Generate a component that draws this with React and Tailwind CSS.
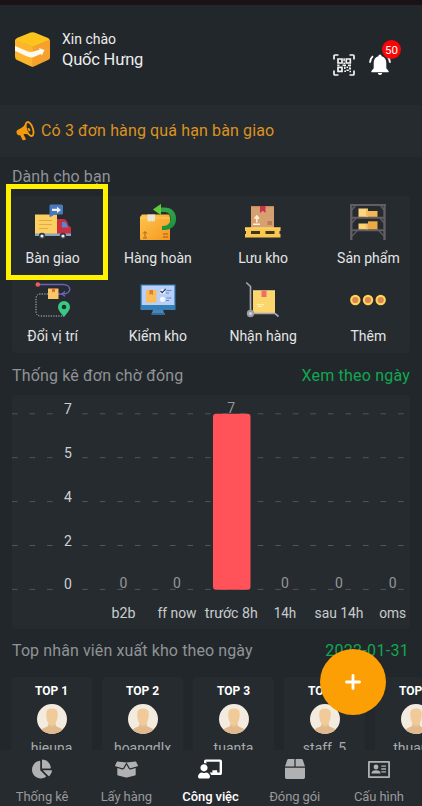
import React from "react";
import { FaChartPie, FaBoxOpen, FaChalkboardTeacher, FaBox } from "react-icons/fa";

function Logo() {
  return (
    <svg width="36" height="35" viewBox="0 0 36 35">
      <path d="M15.500 0.600 Q17.500 -0.200 19.500 0.600 L33 6 Q35 7 34 8.500 L18 15 L0.500 8.500 Q0 7 2 6 Z" fill="#fcc41c" />
      <path d="M0 7.500 L18 14.500 V34.500 Q17 35 15 34 L2 28 Q0 27 0 24.500 Z" fill="#fcb52c" />
      <path d="M18 14.500 L35 7.500 V25.500 Q35 27 33 28 L20 34 Q18 35 17 34.500 Z" fill="#f5a12b" />
      <path d="M0 14 L13 19.500 Q16 20.700 20 19 L24.500 17.800 L24 16 L29.500 18 L26.800 23.500 L26 22 L18 25.300 Q15 26 11 24 L0 18.800 Z" fill="#fffaf0" />
    </svg>
  );
}

function ScanCode() {
  return (
    <svg width="22" height="22" viewBox="0 0 22 22" fill="none" stroke="#f4f5f5">
      <path d="M1 5.500 V2 Q1 1 2 1 H5.500 M16.500 1 H20 Q21 1 21 2 V5.500 M21 16.500 V20 Q21 21 20 21 H16.500 M5.500 21 H2 Q1 21 1 20 V16.500" strokeWidth="1.700" />
      <path d="M5 5 h4 v4 h-4 Z M13.300 5 h4 v4 h-4 Z M5 13.300 h4 v4 h-4 Z" strokeWidth="1.700" />
      <path d="M11.100 4.200 v3 M10.300 9.300 h1.800 M9.500 11.200 h3.500 M15 11.200 h3 M4.200 11.200 h2.300 M11.800 12.500 v2.500 M13.500 13.200 h1.700 M16 14.800 h2 M13.500 16.300 h2.300 M11.300 17.300 h1.700 M16.500 17.600 h1.500 M16.900 12.500 v1.300" strokeWidth="1.500" />
    </svg>
  );
}

function Bell() {
  return (
    <svg width="22" height="22" viewBox="0 0 22 22" fill="#fff">
      <path d="M11 0.500 q1.500 0 1.700 1.700 C16 3.200 17.300 5.800 17.300 9 V14.300 L19.600 17 V18.300 H2.400 V17 L4.700 14.300 V9 C4.700 5.800 6 3.200 9.300 2.200 Q9.500 0.500 11 0.500 Z" />
      <path d="M8.800 19 h4.400 q-0.300 2 -2.200 2 t-2.200 -2 Z" />
      <path d="M4 2.200 Q1.200 4.600 1 8.800 M18 2.200 Q20.800 4.600 21 8.800" fill="none" stroke="#fff" strokeWidth="1.700" />
    </svg>
  );
}

function Megaphone() {
  return (
    <svg width="19" height="20" viewBox="0 0 19 20" fill="none">
      <path d="M0.700 12.200 C0 10.700 0.800 9.300 2.300 8.600 C6 7 8.700 5 9.800 1.500 L15 15.300 C12.500 12.800 10 12.600 7.500 13.400 L9.800 17.700 Q10.200 18.800 8.900 19 L6.700 19.200 L4.200 14.200 C2.500 14.600 1.400 13.900 0.700 12.200 Z" fill="#f59a0b" />
      <ellipse cx="13.600" cy="8" rx="3.300" ry="7.300" transform="rotate(-19 13.600 8)" fill="#262b2f" stroke="#f59a0b" strokeWidth="1.800" />
      <path d="M11.500 7 Q14.500 6.500 14.300 10 L12.700 10.400 Z" fill="#f59a0b" />
    </svg>
  );
}

function Truck() {
  return (
    <svg width="36" height="36" viewBox="0 0 36 36">
      <path d="M22 15 h7 q2 0 3 2.500 l1.500 4 l2.500 2 V31 H22 Z" fill="#c92f42" />
      <path d="M27 18 h3 q1 0 1.500 1.500 l1.500 4 h-6 Z" fill="#5686d6" />
      <path d="M0 10.500 h22 v20 H0 Z" fill="#fbcf62" />
      <path d="M0 29.500 h36 v2.500 H0 Z" fill="#8ba5bb" />
      <path d="M4 16.500 h13 M4 20.500 h13 M4 24.500 h9" stroke="#e5a944" strokeWidth="1" />
      <circle cx="7" cy="32" r="3.200" fill="#353a43" /><circle cx="7" cy="32" r="1.600" fill="#eceff2" />
      <circle cx="28" cy="32" r="3.200" fill="#353a43" /><circle cx="28" cy="32" r="1.600" fill="#eceff2" />
      <path d="M15.500 0.500 h11 q1.500 0 1.500 1.500 v7 q0 1.500 -1.500 1.500 h-7 l-4 2.500 q-1 0 -1 -1.500 V2 q0 -1.500 1 -1.500 Z" fill="#4a78bf" />
      <path d="M17 4.700 h5 v-2 l4 3.200 l-4 3.200 v-2 h-5 Z" fill="#edf3fb" />
    </svg>
  );
}

function ReturnBox() {
  return (
    <svg width="36" height="36" viewBox="0 0 36 36">
      <defs>
        <linearGradient id="rb" x1="0" y1="0" x2="1" y2="1"><stop stopColor="#ffc64d" /><stop offset="1" stopColor="#f59720" /></linearGradient>
        <linearGradient id="ra" x1="0" y1="0" x2="0" y2="1"><stop stopColor="#39a84c" /><stop offset="1" stopColor="#17913c" /></linearGradient>
      </defs>
      <path d="M2 10.500 h27 l1 3 V36 H1 q-1 0 -1 -1 V13 Z" fill="url(#rb)" />
      <path d="M0 14 h30" stroke="#ffd575" strokeWidth="0.800" />
      <path d="M7.500 10.500 h7.500 v7 l-1.200 -0.800 l-1.300 1 l-1.300 -1 l-1.300 1 l-1.200 -0.800 l-1.200 0.800 Z" fill="#e8e4dc" />
      <path d="M5 33 v-5 M3 29.500 l2 -2 l2 2 M3 34 h4 M23 30 h5 M23 33 h5" stroke="#9b5a17" strokeWidth="0.900" fill="none" />
      <path d="M13 5.500 L21 0 V3.500 H24 C32 3.500 36 8 36 15 C36 22 31 26 24.500 26 H22 V22 H23 C28 22 30.500 18.500 30.500 14.500 C30.500 10 28 8 24 8 H21 V11 Z" fill="url(#ra)" />
      <path d="M13 5.500 L21 0 V11 Z" fill="#64c83b" />
    </svg>
  );
}

function Pallet() {
  return (
    <svg width="36" height="36" viewBox="0 0 36 36">
      <path d="M6 2 h23 v22 H6 Z" fill="#d7a071" />
      <path d="M6 2 h23 v1.200 H6 Z" fill="#c78a5e" />
      <path d="M15 2 h5.500 v7 l-2.700 -2.200 L15 9 Z" fill="#c9334c" />
      <path d="M8 20.300 h7 M11.800 18.500 v-5 M9.500 14.700 l2.300 -2.700 l2.300 2.700" stroke="#fff1df" strokeWidth="1.500" fill="none" />
      <path d="M22.500 18 h4.500 M22.500 20 h4.500" stroke="#8b5c41" strokeWidth="0.900" />
      <path d="M0 23.500 h35.500 v3.500 h-1 v3 h1 v3.500 H0 V30 h1 v-3 H0 Z" fill="#fac74f" />
      <path d="M6 27 h9 v3 H6 Z M20.500 27 h9 v3 h-9 Z" fill="#40341f" />
      <path d="M0 23.500 h35.500 v1 H0 Z" fill="#ffd974" />
    </svg>
  );
}

function Shelf() {
  return (
    <svg width="36" height="36" viewBox="0 0 36 36">
      <path d="M1.300 0 V36 M34.500 0 V36" stroke="#655f66" strokeWidth="2.300" />
      <path d="M0 1 h36 M1 13.700 h34 M1 26.200 h34" stroke="#625c63" strokeWidth="2" />
      <path d="M2 6 L6 1 M34 6 L30 1 M2 19 L6 14 M34 19 L30 14 M2 32 L7 27 M34 32 L29 27" stroke="#625c63" strokeWidth="1.300" />
      <path d="M8.500 4.500 h9.500 v8.300 H8.500 Z" fill="#fcd681" /><path d="M18 7 h9.500 v5.800 H18 Z" fill="#f2b854" />
      <path d="M8.500 19.500 h9.500 v5.800 H8.500 Z" fill="#fbd374" /><path d="M18 17.300 h9.500 v8 H18 Z" fill="#eda943" />
      <path d="M16 5 h2 v7.800 h-2 Z M16 20 h2 v5.300 h-2 Z" fill="#f4bc5f" />
    </svg>
  );
}

function Route() {
  return (
    <svg width="36" height="36" viewBox="0 0 36 36" fill="none">
      <path d="M4 2.500 h24 c9 0 9 9.500 0 9.500 h-6" stroke="#6c62bd" strokeWidth="1.500" />
      <path d="M30 9.500 l-3 2.500 l3 2.200" stroke="#6c62bd" strokeWidth="1.400" />
      <path d="M13 12 H5.500 q-4.500 0 -4.500 4.500 v13 q0 4.500 4.500 4.500 H29" stroke="#b9bdc0" strokeWidth="1" strokeDasharray="1.300 1.200" />
      <circle cx="2.800" cy="2.500" r="2.300" fill="#f15a5d" />
      <path d="M13 6.500 h10.500 v10.500 H13 Z" fill="#fac568" />
      <path d="M17 6.500 h3 v4 l-1.500 -1 l-1.500 1 Z" fill="#d76b35" />
      <path d="M29 35 C25.500 30.500 23 28 23 25 a6 6 0 0 1 12 0 C35 28 32.500 30.500 29 35 Z" fill="#38c982" />
      <circle cx="29" cy="25" r="2.300" fill="#25302e" />
    </svg>
  );
}

function Monitor() {
  return (
    <svg width="36" height="34" viewBox="0 0 36 34">
      <path d="M13 27 h10 l1.500 4 H11.500 Z" fill="#4687bd" />
      <path d="M11.500 30 h13.500 v2 H11.500 Z" fill="#336a9f" />
      <path d="M0.500 1.500 h35 v25.500 H0.500 Z" fill="#367fb7" />
      <path d="M1.800 2.500 h32.500 v19.500 H1.800 Z" fill="#b8cffa" />
      <path d="M6 7 h10.500 v12.500 H6 Z" fill="#fbbb56" />
      <path d="M9.500 7 h3.500 v5 l-1.700 -1.200 L9.500 12 Z" fill="#d37f35" />
      <circle cx="22.500" cy="8.500" r="2.600" fill="#edf2ff" /><circle cx="22.500" cy="16.300" r="2.600" fill="#f6f5ff" />
      <path d="M20.500 8 l1.700 1.700 l3.500 -3.800" stroke="#263d5f" strokeWidth="1.200" fill="none" />
      <path d="M26.500 7.500 h5 M26 10 h3 M26.500 15 h5 M26 17.500 h3" stroke="#698abb" strokeWidth="1.200" />
    </svg>
  );
}

function Trolley() {
  return (
    <svg width="34" height="36" viewBox="0 0 34 36">
      <path d="M7 8.500 h22 v22.500 H7 Z" fill="#fbd66c" />
      <path d="M7 8.500 h22 v1 H7 Z" fill="#ffe28c" />
      <path d="M15.500 8.500 h5 v6.500 h-5 Z" fill="#f26d62" />
      <path d="M11 22.700 h7 M12 24.500 h4" stroke="#fff3c5" strokeWidth="1" />
      <path d="M0.800 1 L4.500 4.500 V30 M6 31.500 H29 L32 34" stroke="#a9a3b2" strokeWidth="1.700" fill="none" strokeLinecap="round" />
      <circle cx="4.500" cy="31.500" r="3.700" fill="#9d9da5" /><circle cx="4.500" cy="31.500" r="1.600" fill="#d6d5dc" />
    </svg>
  );
}

function More() {
  return (
    <svg width="36" height="12" viewBox="0 0 36 12">
      {[5.3, 18, 30.7].map((x) => (
        <g key={x}>
          <circle cx={x} cy="6" r="5.200" fill="#fbd657" />
          <circle cx={x} cy="6" r="3.100" fill="#df8554" />
        </g>
      ))}
    </svg>
  );
}

function IdCard() {
  return (
    <svg width="22" height="17" viewBox="0 0 22 17" fill="#b0b1b3">
      <path fillRule="evenodd" d="M1 0 h20 q1 0 1 1 v15 q0 1 -1 1 h-20 q-1 0 -1 -1 v-15 Q0 0 1 0 Z M1.800 1.800 v13.400 h18.400 V1.800 Z" />
      <circle cx="8" cy="6" r="2.400" />
      <path d="M3.500 12.500 q0 -3.200 4.500 -3.200 t4.500 3.200 Z" />
      <path d="M13.300 4.400 h4.700 v1.400 h-4.700 Z M13.300 7.300 h4.700 v1.400 h-4.700 Z M13.300 10.200 h4.700 v1.400 h-4.700 Z" />
    </svg>
  );
}

function Avatar() {
  return (
    <svg width="30" height="30" viewBox="0 0 30 30">
      <defs><clipPath id="av"><circle cx="15" cy="15" r="15" /></clipPath></defs>
      <g clipPath="url(#av)">
        <path d="M0 0 h30 v30 H0 Z" fill="#f3ebdf" />
        <path d="M3 30 q0 -5 5 -6.500 q3.500 -1 3.500 -3 h7 q0 2 3.500 3 q5 1.500 5 6.500 Z" fill="#e0b98d" />
        <path d="M11.500 17 h7 v4.500 q-3.500 3.500 -7 0 Z" fill="#e9c091" />
        <path d="M9.300 9 q0 -4.500 5.700 -4.500 t5.700 4.500 q0.400 6 -1.700 9.500 q-1.700 3 -4 3 t-4 -3 q-2.100 -3.500 -1.700 -9.500 Z" fill="#f0ca98" />
      </g>
    </svg>
  );
}

const actions = [
  ["Bàn giao", Truck], ["Hàng hoàn", ReturnBox], ["Lưu kho", Pallet], ["Sản phẩm", Shelf],
  ["Đổi vị trí", Route], ["Kiểm kho", Monitor], ["Nhận hàng", Trolley], ["Thêm", More],
];

const ticks = ["7", "5", "4", "2", "0"];
const cols = [
  ["b2b", 111.5, 24, 0], ["ff now", 165, 39, 0], ["trước 8h", 219.3, 53, 7],
  ["14h", 273, 22.5, 0], ["sau 14h", 327, 49, 0], ["oms", 380.7, 27, 0],
];

function Chart() {
  return (
    <svg className="block" width="398" height="234" viewBox="0 0 398 234" fontFamily="Roboto, sans-serif">
      {ticks.map((label, i) => {
        const y = 18.8 + i * 43.9;
        return (
          <g key={label}>
            <path d={`M0 ${y} H42`} stroke="#50565a" strokeDasharray="5.600 11.950" />
            <path d={`M70.200 ${y} H393`} stroke="#50565a" strokeDasharray="5.600 11.950" />
            <text x="56" y={y} fontSize="14" textAnchor="middle" fill="#ced0d2">{label}</text>
          </g>
        );
      })}
      <rect x="201" y="18.700" width="37.500" height="176" rx="3" fill="#ff5259" />
      {cols.map(([label, x, w, value]) => (
        <g key={label} textAnchor="middle">
          <text x={x} y={value ? 17.6 : 193.4} fontSize="14" fill="#93979a">{value}</text>
          <text x={x} y="222.700" fontSize="14" textLength={w} lengthAdjust="spacingAndGlyphs" fill="#c9cbcd">{label}</text>
        </g>
      ))}
    </svg>
  );
}

const staff = ["hieuna", "hoangdlx", "tuanta", "staff_5", "thuantt"];

const tabs = [
  ["Thống kê", <FaChartPie size={20} />], ["Lấy hàng", <FaBoxOpen size={23} />],
  ["Công việc", <FaChalkboardTeacher size={24} />], ["Đóng gói", <FaBox size={20} />], ["Cấu hình", <IdCard />],
];

export default function App() {
  return (
    <div className="relative flex h-[806px] w-[422px] flex-col overflow-hidden bg-[#22272b] font-['Roboto',sans-serif] text-white">
      <div className="h-[5px] shrink-0 bg-[#191315]" />
      <header className="flex h-[100px] shrink-0 items-start pl-[15px]">
        <div className="mt-[27px]"><Logo /></div>
        <div className="ml-[11px] mt-[24px] whitespace-nowrap text-[#eceded]">
          <div className="h-5 text-[14px] leading-5">Xin chào</div>
          <div className="h-[22px] text-[16.500px] leading-[22px] tracking-[-0.2px]">Quốc Hưng</div>
        </div>
        <div className="ml-auto mt-[49px]"><ScanCode /></div>
        <div className="relative ml-[14px] mr-[31px] mt-[49px]">
          <Bell />
          <span className="absolute -top-[14px] left-[13px] flex h-[19px] w-[19px] items-center justify-center rounded-full bg-[#f90505] pt-[2px] text-[11.500px] leading-none">50</span>
        </div>
      </header>
      <div className="flex h-[52px] shrink-0 items-center bg-[#262b2f] pl-[16px]">
        <Megaphone />
        <span className="ml-[6px] whitespace-nowrap text-[16px] leading-5 tracking-[0.13px] text-[#dd9220]">Có 3 đơn hàng quá hạn bàn giao</span>
      </div>
      <h2 className="mt-[9px] h-[21px] shrink-0 pl-[12px] text-[16px] leading-[21px] tracking-[0.08px] text-[#909396]">Dành cho bạn</h2>
      <section className="mx-[12px] mt-[9px] h-[157px] w-[398px] shrink-0 rounded bg-[#262b2f]">
        <div className="-ml-[12px] grid w-[421px] grid-cols-4 pt-[8px]">
          {actions.map(([label, Icon]) => (
            <div key={label} className="flex h-[78px] flex-col items-center">
              <div className="flex h-[36px] items-center"><Icon /></div>
              <div className="mt-[8px] whitespace-nowrap text-[14px] leading-5 text-[#e4e5e6]">{label}</div>
            </div>
          ))}
        </div>
      </section>
      <div className="mt-[12px] flex h-[22px] w-[422px] shrink-0 justify-between whitespace-nowrap pl-[12px] pr-[12px] text-[16px] leading-[22px] text-[#909396]">
        <h2 className="tracking-[0.16px]">Thống kê đơn chờ đóng</h2>
        <span className="tracking-[0.2px] text-[#10a751]">Xem theo ngày</span>
      </div>
      <section className="ml-[12px] mt-[8px] h-[234px] w-[398px] shrink-0 rounded bg-[#262b2f]"><Chart /></section>
      <div className="mt-[11px] flex h-[22px] w-[422px] shrink-0 justify-between whitespace-nowrap pl-[12px] pr-[13px] text-[16px] leading-[22px] text-[#909396]">
        <h2 className="tracking-[0.11px]">Top nhân viên xuất kho theo ngày</h2>
        <span className="tracking-[0.3px] text-[#10a751]">2022-01-31</span>
      </div>
      <div className="mt-[15px] flex h-[73px] shrink-0 gap-[10px] overflow-hidden pl-[11px]">
        {staff.map((name, i) => (
          <div key={name} className="flex h-[100px] w-[81px] shrink-0 flex-col items-center rounded bg-[#262b2f]">
            <div className="mt-[5px] h-[18px] text-[12px] font-bold leading-[18px]">TOP {i + 1}</div>
            <div className="mt-[4px]"><Avatar /></div>
            <div className="mt-[4px] text-[14px] leading-5 text-[#a9abad]">{name}</div>
          </div>
        ))}
      </div>
      <nav className="grid h-[56px] w-[421px] shrink-0 grid-cols-5 bg-[#262b2f] text-[#b0b1b3]">
        {tabs.map(([label, icon], i) => (
          <div key={label} className={i === 2 ? "flex flex-col items-center text-white" : "flex flex-col items-center"}>
            <div className="mt-[7px] flex h-[24px] items-center">{icon}</div>
            <div className={i === 2 ? "mt-[6px] whitespace-nowrap text-[13px] font-medium leading-5 tracking-[-0.1px]" : "mt-[6px] whitespace-nowrap text-[13px] leading-5 tracking-[-0.1px] text-[#98999b]"}>{label}</div>
          </div>
        ))}
      </nav>
      <div className="absolute left-[6px] top-[184px] h-[96px] w-[102px] border-[5px] border-[#fff200]" />
      <button className="absolute left-[320px] top-[648.500px] flex h-[66px] w-[66px] items-center justify-center rounded-full bg-[#fc9f04]">
        <svg width="16" height="16" viewBox="0 0 16 16"><path d="M8 1.500 V14.500 M1.500 8 H14.500" stroke="#fff" strokeWidth="2.800" strokeLinecap="round" /></svg>
      </button>
    </div>
  );
}
